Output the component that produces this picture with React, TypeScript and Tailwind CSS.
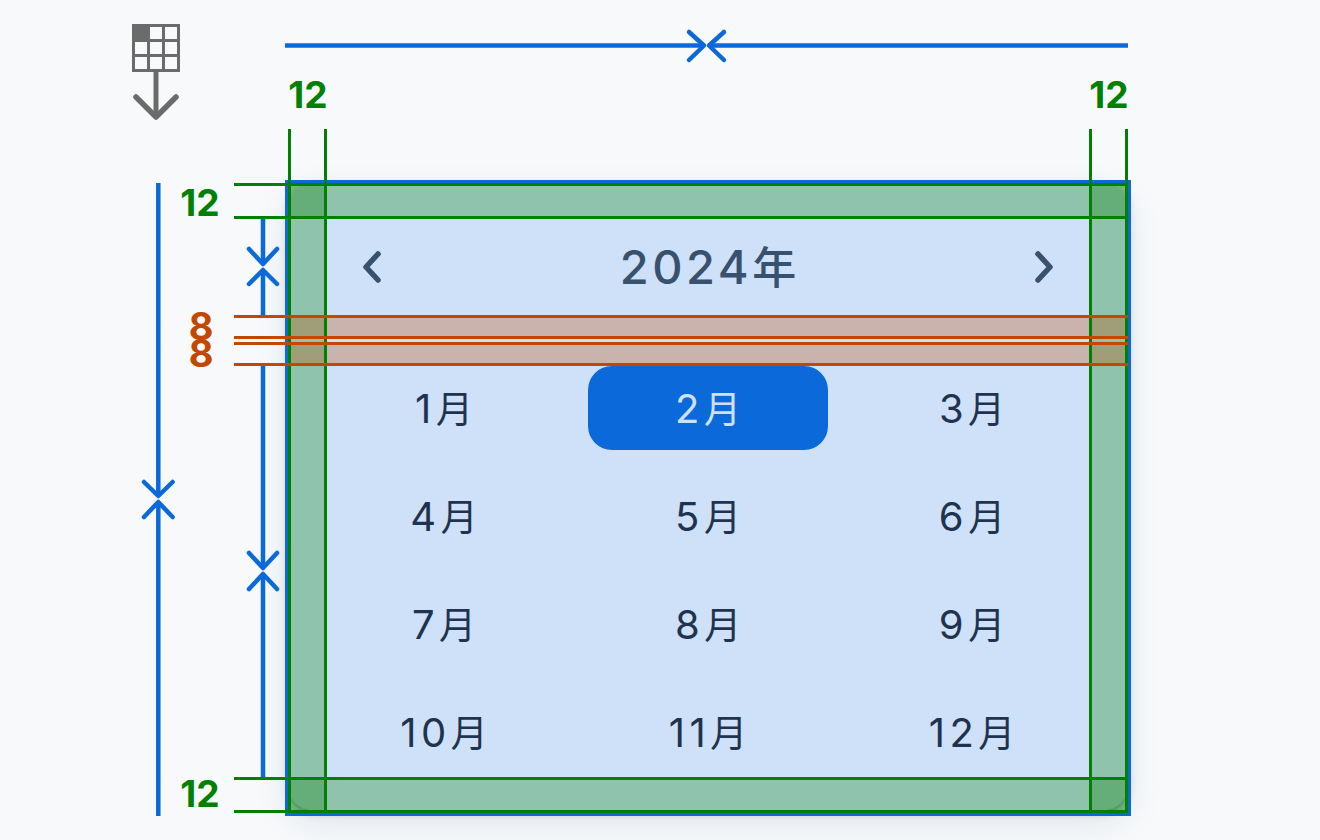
import React from "react";

const months = ["1","2","3","4","5","6","7","8","9","10","11","12"];
const sans = "font-['Inter','Noto_Sans_CJK_JP',sans-serif]";

function Guides() {
  const blue = "#0b69da";
  const green = "#008000";
  const orange = "#c24800";
  const g = (d: string, c: string) => <path d={d} stroke={c} strokeWidth={3} fill="none" />;
  return (
    <svg className="absolute inset-0 pointer-events-none" width={1320} height={840} viewBox="0 0 1320 840">
      {/* grid + arrow icon */}
      <g fill="none" stroke="#6b6b6b">
        <rect x={133.5} y={25.5} width={45} height={45} strokeWidth={3} />
        <path d="M148.500 25v46M163.500 25v46M133 40.500h46M133 55.500h46" strokeWidth={3} />
        <rect x={133} y={25} width={15} height={15} fill="#6b6b6b" stroke="none" />
        <path d="M156 71v45" strokeWidth={5} />
        <path d="M136 97l20 20 20-20" strokeWidth={5.500} strokeLinecap="round" strokeLinejoin="round" />
      </g>
      {/* blue measures */}
      <g fill="none" stroke={blue} strokeWidth={4.500} strokeLinecap="round" strokeLinejoin="round">
        <path d="M285 45.500H704M1128 45.500H709" strokeLinecap="butt" />
        <path d="M689 32l15 13.500-15 14.500M724 32l-15 13.500 15 14.500" />
        <path d="M158.300 183V496M158.300 816V502" strokeLinecap="butt" />
        <path d="M144 482l14.300 14 14.300-14M144 517l14.300-15 14.300 15" />
        <path d="M263 219V264M263 316V270" strokeLinecap="butt" />
        <path d="M249 249l14 15 14-15M249 284l14-14 14 14" />
        <path d="M263 366V568M263 777V574" strokeLinecap="butt" />
        <path d="M249 553l14 15 14-15M249 589l14-15 14 15" />
      </g>
      {/* outline */}
      <rect x={286.5} y={181.5} width={843} height={633} fill="none" stroke={blue} strokeWidth={3} />
      {/* green guides */}
      {g("M289.500 129V813M325.500 129V813M1090.500 129V813M1126.500 129V813", green)}
      {g("M234 184.500H1128M234 217.500H1128M234 778.500H1128M234 811.500H1128", green)}
      {/* orange guides */}
      {g("M234 316.500H1128M234 337.500H1128M234 343.500H1128M234 364.500H1128", orange)}
    </svg>
  );
}

function Tints() {
  return (
    <div className="absolute inset-x-0 top-0 bottom-[-3px]">
      <div className="absolute inset-0 bg-[#0b69da]/20 rounded-[24px]" />
      <div className="absolute left-0 top-0 bottom-0 w-[36px] bg-[#008000]/30" />
      <div className="absolute right-0 top-0 bottom-0 w-[36px] bg-[#008000]/30" />
      <div className="absolute left-0 right-0 top-0 h-[36px] bg-[#008000]/30" />
      <div className="absolute left-0 right-0 bottom-0 h-[36px] bg-[#008000]/30" />
      <div className="absolute left-0 right-0 top-[132px] h-[24px] bg-[#c24800]/30" />
      <div className="absolute left-0 right-0 top-[159px] h-[24px] bg-[#c24800]/30" />
    </div>
  );
}

function Month({ n }: { n: string }) {
  const active = n === "2";
  return (
    <div
      className={`h-[84px] pt-[2px] flex items-baseline justify-center rounded-[24px] leading-[82px] ${
        active ? "bg-[#0b69da] text-[#cfe0f7]" : "text-[#1f3350]"
      }`}
    >
      <span className="text-[40px] tracking-[4.5px]">{n}</span>
      <span className="text-[37px]">月</span>
    </div>
  );
}

export default function App() {
  return (
    <div className={`relative w-[1320px] h-[840px] overflow-hidden bg-[#f7f9fb] pl-[288px] pt-[183px] ${sans}`}>
      <div className="relative w-[840px] rounded-[24px] bg-white shadow-[0_3px_9px_rgba(20,40,70,0.22),0_12px_36px_rgba(30,50,80,0.10)] p-[36px] flex flex-col">
        <Tints />
        <div className="relative h-[96px] flex items-center justify-between px-[36px] text-[#38516f]">
          <svg width="24" height="36" viewBox="0 0 24 36" fill="none" stroke="currentColor" strokeWidth="5.5" strokeLinecap="round" strokeLinejoin="round">
            <path d="M18 5L6 18l12 13" />
          </svg>
          <div className="flex items-baseline leading-[58px] font-medium text-[#38516f]">
            <span className="text-[47px] tracking-[3.5px]">2024</span>
            <span className="text-[44px]">年</span>
          </div>
          <svg width="24" height="36" viewBox="0 0 24 36" fill="none" stroke="currentColor" strokeWidth="5.5" strokeLinecap="round" strokeLinejoin="round">
            <path d="M6 5l12 13L6 31" />
          </svg>
        </div>
        <div className="relative mt-[51px] grid grid-cols-3 gap-[24px]">
          {months.map((m) => (
            <Month key={m} n={m} />
          ))}
        </div>
      </div>
      <Guides />
      <div className="absolute left-[288px] top-[72px] w-[40px] text-center text-[37px] leading-[46px] font-bold text-[#008000]">12</div>
      <div className="absolute left-[1089px] top-[72px] w-[40px] text-center text-[37px] leading-[46px] font-bold text-[#008000]">12</div>
      <div className="absolute left-[180px] top-[180px] w-[40px] text-center text-[37px] leading-[46px] font-bold text-[#008000]">12</div>
      <div className="absolute left-[180px] top-[771px] w-[40px] text-center text-[37px] leading-[46px] font-bold text-[#008000]">12</div>
      <div className="absolute left-[181px] top-[313px] w-[40px] flex flex-col items-center text-[38px] leading-[27px] font-bold text-[#c24800]">
        <span>8</span>
        <span>8</span>
      </div>
    </div>
  );
}
